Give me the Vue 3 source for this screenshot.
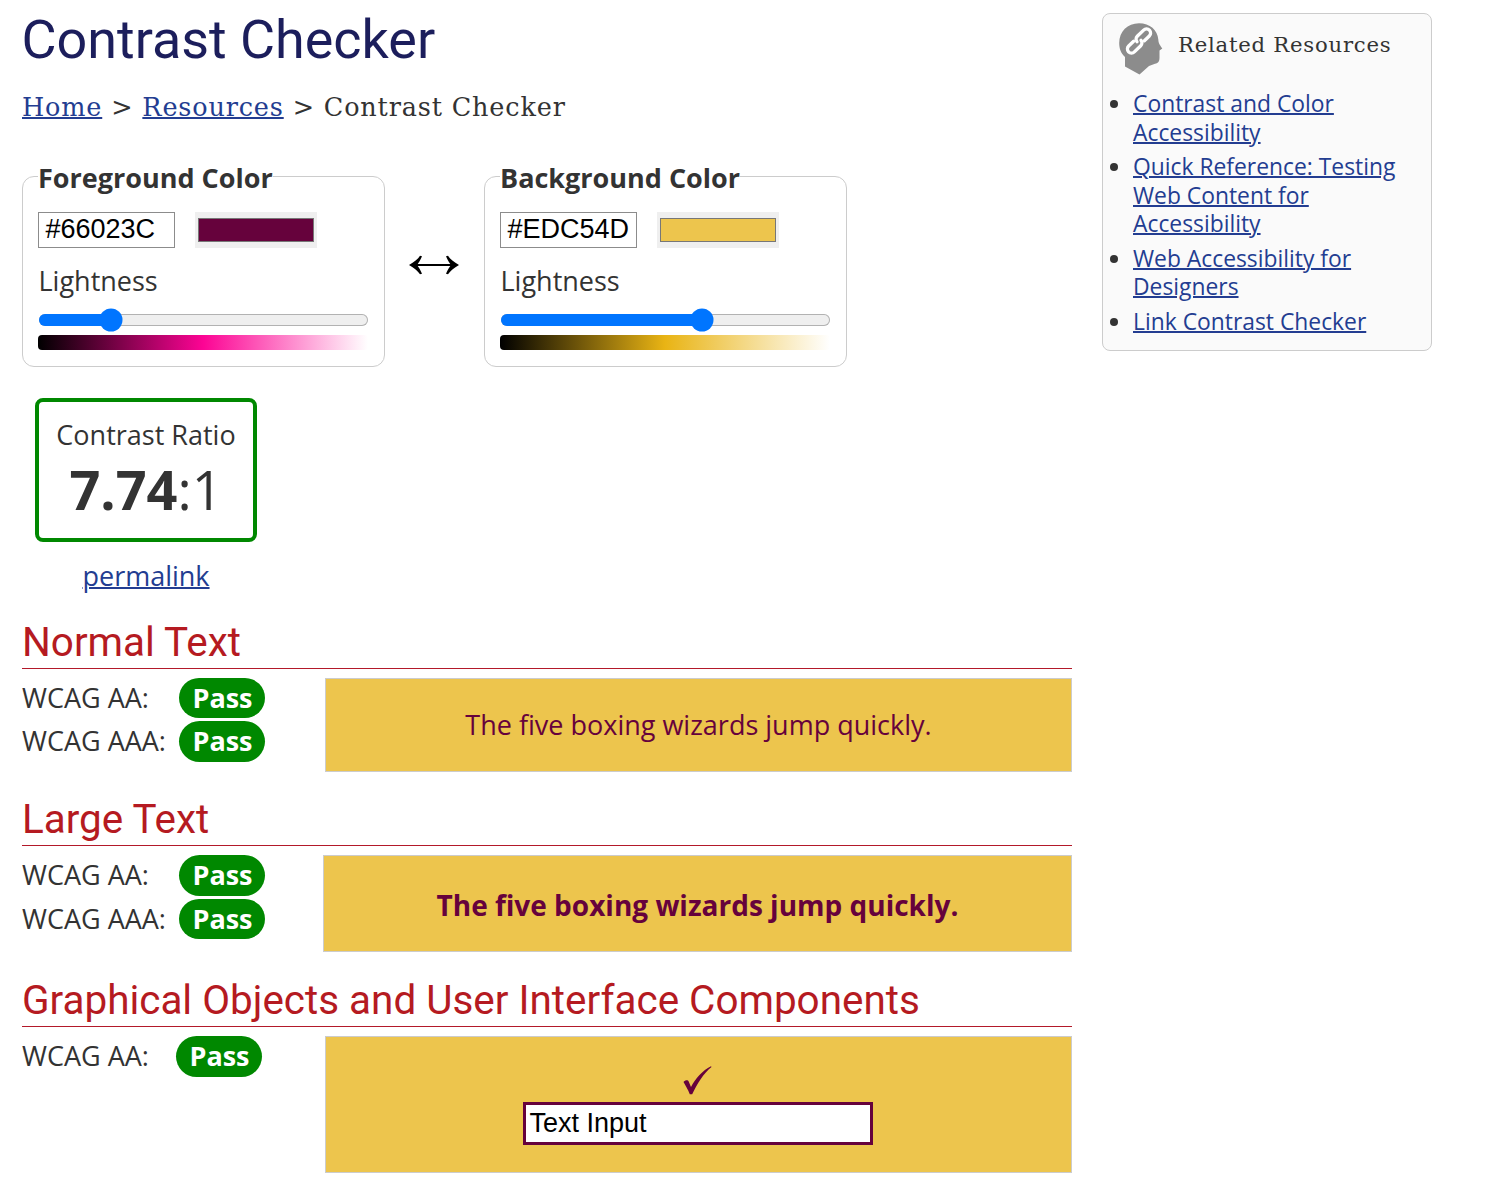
<script setup>
const pickers = [
  { id: 'fg', title: 'Foreground Color', hex: '#66023C', lightness: 20, mid: '#fc0494' },
  { id: 'bg', title: 'Background Color', hex: '#EDC54D', lightness: 62, mid: '#e9b414' },
]

const related = [
  'Contrast and Color Accessibility',
  'Quick Reference: Testing Web Content for Accessibility',
  'Web Accessibility for Designers',
  'Link Contrast Checker',
]
</script>

<template>
  <div class="page">
    <main class="main">
      <h1>Contrast Checker</h1>
      <nav class="crumbs"><a href="#">Home</a> &gt; <a href="#">Resources</a> &gt; Contrast Checker</nav>

      <div class="pickers">
        <template v-for="(p, i) in pickers" :key="p.id">
          <button v-if="i === 1" class="swap" type="button" aria-label="Swap colors">
            <svg width="50" height="20" viewBox="0 0 50 20">
              <path d="M5 10H45" stroke="#000" stroke-width="2" />
              <path d="M0 10C5 7 9 4 11 .7L13 1.300C11.500 5 10 7.500 8 10C10 12.500 11.500 15 13 18.700L11 19.300C9 16 5 13 0 10Z" />
              <path d="M50 10C45 7 41 4 39 .7L37 1.300C38.500 5 40 7.500 42 10C40 12.500 38.500 15 37 18.700L39 19.300C41 16 45 13 50 10Z" />
            </svg>
          </button>
          <fieldset class="picker">
            <legend>{{ p.title }}</legend>
            <div class="inputs">
              <span class="hex">{{ p.hex }}</span>
              <span class="well"><span class="well-color" :style="{ background: p.hex }"></span></span>
            </div>
            <div class="label">Lightness</div>
            <div class="slider">
              <div class="track"><div class="fill" :style="{ width: p.lightness + '%' }"></div></div>
              <div class="thumb" :style="{ left: `calc(${p.lightness}% + ${(50 - p.lightness) * 0.24}px)` }"></div>
            </div>
            <div class="ramp" :style="{ background: `linear-gradient(to right, #000, ${p.mid} 50%, #fff)` }"></div>
          </fieldset>
        </template>
      </div>

      <div class="result">
        <div class="ratio">
          <div class="ratio-label">Contrast Ratio</div>
          <div class="ratio-value"><b>7.74</b>:1</div>
        </div>
        <a class="permalink" href="#">permalink</a>
      </div>

      <section class="normal">
        <h2>Normal Text</h2>
        <div class="row">
          <div class="checks">
            <div class="check"><span>WCAG AA:</span><b>Pass</b></div>
            <div class="check"><span>WCAG AAA:</span><b>Pass</b></div>
          </div>
          <div class="sample">The five boxing wizards jump quickly.</div>
        </div>
      </section>

      <section class="large">
        <h2>Large Text</h2>
        <div class="row">
          <div class="checks">
            <div class="check"><span>WCAG AA:</span><b>Pass</b></div>
            <div class="check"><span>WCAG AAA:</span><b>Pass</b></div>
          </div>
          <div class="sample">The five boxing wizards jump quickly.</div>
        </div>
      </section>

      <section class="objects">
        <h2>Graphical Objects and User Interface Components</h2>
        <div class="row">
          <div class="checks">
            <div class="check"><span>WCAG AA:</span><b>Pass</b></div>
          </div>
          <div class="sample">
            <svg class="tick" width="29" height="29" viewBox="0 0 29 29">
              <path d="M.5 16C2 14 5 13.500 5.700 15.500L8 21C12.500 12.500 19.500 4.500 28 .3L28.500 .9C20.500 7.500 14.500 17 9.200 28.300H6.800C5 23.500 2.500 19.500 .5 16Z" />
            </svg>
            <div class="text-input">Text Input</div>
          </div>
        </div>
      </section>
    </main>

    <aside class="related">
      <div class="related-head">
        <svg width="44" height="52" viewBox="0 0 44 52">
          <path fill="#8c8c8c" d="M20 .2C31 .2 38.500 7 39.300 16.500C39.500 19.500 40 21 43.300 25.500L40.500 27.500V34.500C40.500 38.500 39.500 39.700 36 40.800L30 43L20.500 51.500L6 43.500V34C2 30.500 .2 25.500 .2 20C.2 8.500 8.500 .2 20 .2Z" />
          <g fill="none" stroke="#fff" stroke-width="3.300" stroke-linecap="round" transform="rotate(-44 20 18)">
            <path d="M16 14.400H9.100a4.100 4.100 0 0 0 0 8.200H18a4.100 4.100 0 0 0 4-3.800" />
            <path d="M24 21.600H30.900a4.100 4.100 0 0 0 0-8.200H22a4.100 4.100 0 0 0-4 3.800" />
          </g>
        </svg>
        <span>Related Resources</span>
      </div>
      <ul>
        <li v-for="r in related" :key="r"><a href="#">{{ r }}</a></li>
      </ul>
    </aside>
  </div>
</template>

<style>
body {
  background: #fff;
}
</style>

<style scoped>
.page {
  box-sizing: border-box;
  display: flex;
  align-items: flex-start;
  gap: 30px;
  width: 1498px;
  height: 1201px;
  padding-left: 22px;
  overflow: hidden;
  color: #333;
  font: 27px "Open Sans", sans-serif;
}
a {
  color: #233d91;
  text-decoration: underline;
  text-decoration-thickness: 2px;
}
.main {
  width: 1050px;
}
h1 {
  margin: 8px 0 0 -0.5px;
  color: #1c1e5c;
  font: 400 53.900px/64px Roboto, sans-serif;
}
.crumbs {
  margin-top: 17px;
  font: 25.500px/36px "DejaVu Serif", serif;
  letter-spacing: 0.84px;
}
.pickers {
  display: flex;
  margin-top: 33px;
}
.picker {
  box-sizing: border-box;
  width: 363px;
  min-width: 0;
  height: 209px;
  margin: 0;
  padding: 17px 16px 0 15px;
  border: 1px solid #ccc;
  border-radius: 12px;
}
legend {
  height: 37px;
  padding: 0;
  font-weight: 700;
  line-height: 39px;
}
.inputs {
  display: flex;
  gap: 20px;
}
.hex {
  box-sizing: border-box;
  width: 137px;
  height: 36px;
  padding-left: 6.500px;
  border: 1px solid #8c8c8c;
  color: #000;
  font: 27px/33px "Liberation Sans", sans-serif;
}
.well {
  box-sizing: border-box;
  width: 122px;
  height: 36px;
  padding: 6px 3px;
  background: #efefef;
}
.well-color {
  display: block;
  box-sizing: border-box;
  height: 24px;
  border: 1px solid #777;
}
.label {
  height: 36px;
  margin-top: 14px;
  padding-left: 0.5px;
  line-height: 38px;
}
.slider {
  position: relative;
  height: 24px;
  margin-top: 10px;
}
.track {
  box-sizing: border-box;
  height: 12px;
  margin: 0 0 0 1px;
  overflow: hidden;
  border-radius: 6px;
  background: #efefef;
  box-shadow: inset 0 0 0 1px #b2b2b2;
  transform: translateY(6px);
}
.fill {
  height: 100%;
  background: #0075ff;
}
.thumb {
  position: absolute;
  top: 0;
  width: 23px;
  height: 23px;
  border-radius: 50%;
  background: #0075ff;
  transform: translate(-50%, 0.5px);
}
.ramp {
  height: 15px;
  margin-top: 3px;
  border-radius: 4px;
}
.swap {
  align-self: flex-start;
  width: 99px;
  padding: 97px 1px 0 0;
  border: 0;
  background: none;
}
.swap svg {
  display: block;
  margin: 0 auto;
}
.result {
  display: flex;
  flex-direction: column;
  align-items: center;
  width: 222px;
  margin: 31px 0 0 13px;
}
.ratio {
  box-sizing: border-box;
  width: 222px;
  height: 144px;
  padding-top: 14px;
  border: 4px solid #080;
  border-radius: 8px;
  text-align: center;
}
.ratio-label {
  line-height: 37px;
}
.ratio-value {
  font-size: 54px;
  line-height: 73px;
}
.permalink {
  margin-top: 15px;
  line-height: 37px;
}
section {
  display: flex;
  flex-direction: column;
}
.normal {
  height: 177px;
  margin-top: 23px;
}
.large {
  height: 181px;
}
h2 {
  margin: 0;
  border-bottom: 1px solid #b3192a;
  color: #b51a21;
  font: 400 40.440px/51px Roboto, sans-serif;
}
.row {
  display: flex;
  justify-content: space-between;
  align-items: flex-start;
  margin-top: 9px;
}
.checks {
  display: flex;
  flex-direction: column;
  gap: 3px;
}
.normal .checks {
  margin-top: -0.2px;
}
.check {
  display: flex;
  line-height: 40.500px;
}
.check span {
  width: 157px;
}
.objects .check span {
  width: 154px;
}
.check b {
  box-sizing: border-box;
  width: 86px;
  padding-left: 1px;
  border-radius: 21px;
  background: #080;
  color: #fff;
  text-align: center;
}
.sample {
  box-sizing: border-box;
  width: 747px;
  height: 94px;
  border: 1px solid #ccc;
  background: #edc54d;
  color: #66023c;
  line-height: 91px;
  text-align: center;
}
.large .sample {
  width: 749px;
  height: 97px;
  font-size: 28px;
  font-weight: 700;
  line-height: 98px;
}
.objects .sample {
  display: flex;
  flex-direction: column;
  align-items: center;
  height: 137px;
  padding: 29px 2px 0 0;
}
.tick {
  fill: #66023c;
}
.text-input {
  box-sizing: border-box;
  width: 350px;
  height: 43px;
  margin-top: 7px;
  padding-left: 4px;
  border: 3px solid #66023c;
  background: #fff;
  color: #000;
  font: 27px/37px "Liberation Sans", sans-serif;
  text-align: left;
}
.related {
  box-sizing: border-box;
  width: 330px;
  height: 338px;
  margin-top: 13px;
  border: 1px solid #ccc;
  border-radius: 8px;
  background: #fafafa;
}
.related-head {
  display: flex;
  gap: 15px;
  padding: 9px 0 0 16px;
  font: 21.200px/44px "DejaVu Serif", serif;
  letter-spacing: 0.76px;
}
ul {
  margin: 15px 20px 0 30px;
  padding: 0;
  font-size: 22.850px;
  line-height: 28.500px;
}
li {
  margin-bottom: 6px;
}
</style>
